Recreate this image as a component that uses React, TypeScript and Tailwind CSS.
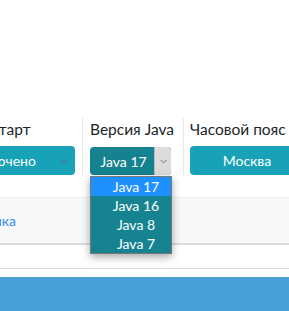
import { ChevronDown } from 'lucide-react';

const font = { fontFamily: 'Lato, "Noto Sans", sans-serif' };

export default function App() {
    const versions = ['Java 17', 'Java 16', 'Java 8', 'Java 7'];

    return (
        <div className="relative w-[289px] h-[311px] overflow-hidden bg-white text-[#212529]" style={font}>
            <div className="h-[118px]" />

            {/* строка настроек */}
            <div className="flex h-[57px]">
                <div className="flex flex-col shrink-0 w-[134px] ml-[-51px] pl-2 pr-[7px] border-r border-[#e5e7eb]">
                    <div className="h-[28px] text-[15.5px] leading-[22px]">Автостарт</div>
                    <div className="relative h-[30px] rounded-[4px] bg-[#17a2b8] text-white text-[14px] flex items-center pr-[36px]">
                        <span className="flex-1 text-center">Выключено</span>
                        <ChevronDown className="absolute right-[4px] top-[8px] w-[14px] h-[14px] text-[#3f7f8a]" strokeWidth={2} />
                    </div>
                </div>

                <div className="flex flex-col shrink-0 w-[101px] pl-[7px] border-r border-[#e5e7eb]">
                    <div className="h-[29px] text-[15.5px] leading-[22px] whitespace-nowrap">Версия Java</div>
                    <div className="flex h-[28px] w-[81px] rounded-[4px] overflow-hidden bg-[#15828f] text-white text-[14px]">
                        <span className="flex-1 flex items-center justify-center pl-[3px]">Java 17</span>
                        <span className="w-[17px] flex items-center justify-center bg-[#dcdcdc] border-l border-[#bbb]">
                            <ChevronDown className="w-[11px] h-[11px] text-[#666]" strokeWidth={2} />
                        </span>
                    </div>
                </div>

                <div className="flex flex-col shrink-0 pl-[6px]">
                    <div className="h-[28px] text-[15.5px] leading-[22px] whitespace-nowrap">Часовой пояс</div>
                    <div className="h-[29px] w-[114px] rounded-[4px] bg-[#17a2b8] text-white text-[14px] flex items-center justify-center">Москва</div>
                </div>
            </div>

            <div className="h-[22px]" />

            {/* панель ссылок */}
            <div className="h-[48px] bg-[#f7f8fa] border-t border-[#eceef0] border-b-2 border-b-[#dcdcdc] flex items-center ml-[-58px]">
                <a className="text-[14px] text-[#3a8ee6]">Статистика</a>
            </div>

            <div className="h-[23px]" />
            <div className="h-px bg-[#dedede]" />
            <div className="h-[8px]" />
            <div className="h-[34px] bg-[#479fd6]" />

            {/* открытый список */}
            <div className="absolute left-[90px] top-[176px] w-[82px] border border-[#777] bg-[#168390] text-white text-[14px] shadow-[0_3px_8px_rgba(0,0,0,0.35)]">
                {versions.map((v, i) => (
                    <div key={v} className={`h-[19px] leading-[19px] pl-[10px] text-center ${i === 0 ? 'bg-[#1e90ff]' : ''}`}>{v}</div>
                ))}
            </div>
        </div>
    );
}
